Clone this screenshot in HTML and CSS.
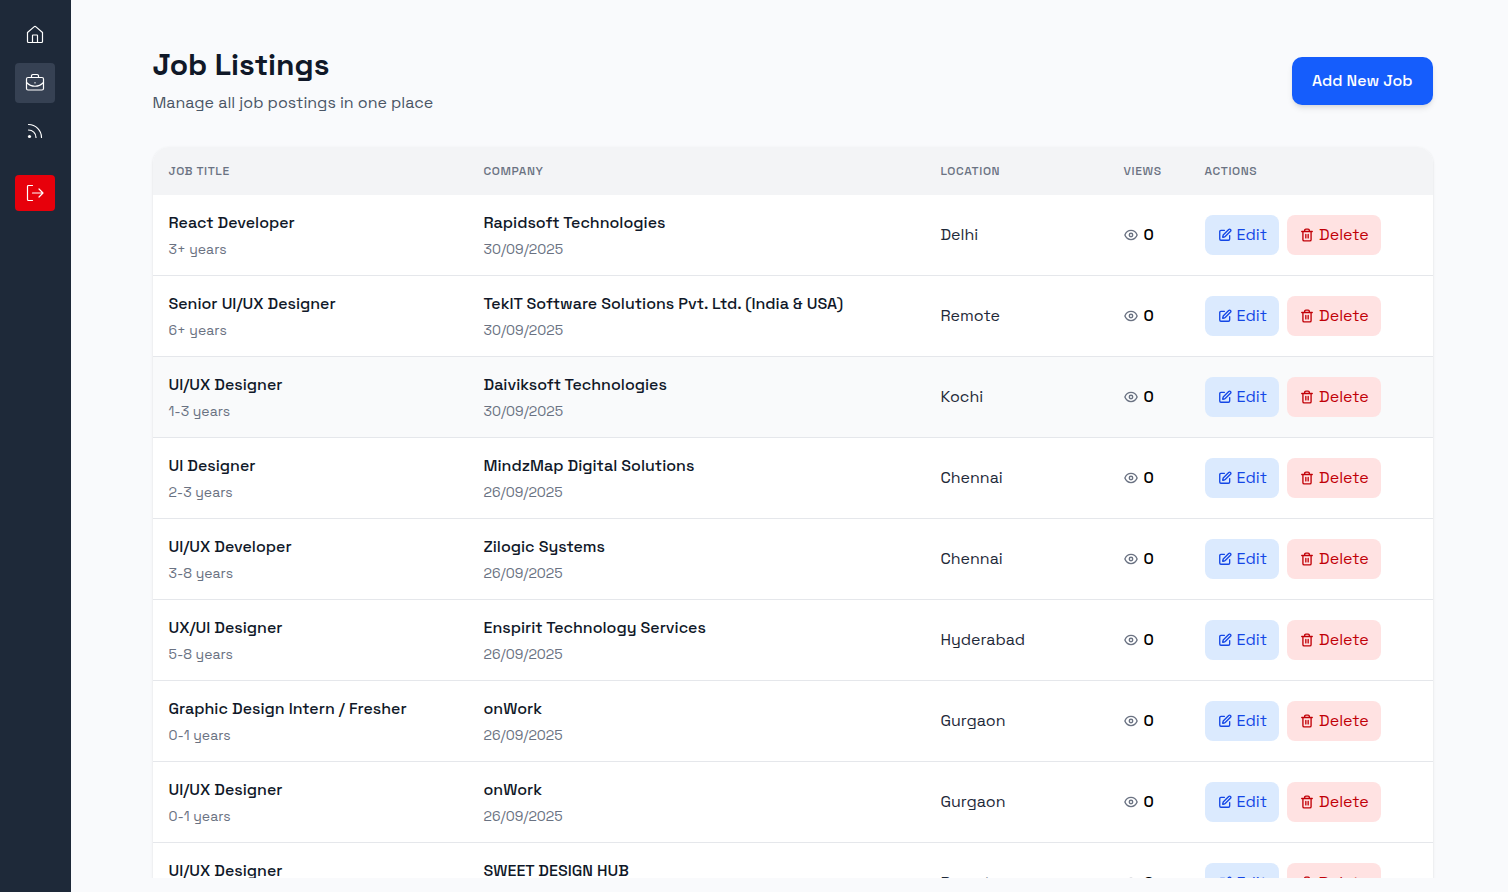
FILE: index.html
```html
<!DOCTYPE html>
<html lang="en">
<head>
    <meta charset="UTF-8">
    <meta name="viewport" content="width=device-width, initial-scale=1.0">
    <title>Job Listings</title>
    <link rel="stylesheet" href="styles.css">
</head>
<body>

    <!-- Icon set -->
    <svg class="icon-defs" aria-hidden="true">
        <symbol id="icon-edit" viewBox="0 0 24 24">
            <path d="M11 4H5a2 2 0 0 0-2 2v13a2 2 0 0 0 2 2h13a2 2 0 0 0 2-2v-6"/>
            <path d="M18.375 2.625a1 1 0 0 1 3 3l-9.013 9.014a2 2 0 0 1-.853.505l-2.873.84a.5.5 0 0 1-.62-.62l.84-2.873a2 2 0 0 1 .506-.852z"/>
        </symbol>
        <symbol id="icon-trash" viewBox="0 0 24 24">
            <path d="M3 6h18M19 6v14a2 2 0 0 1-2 2H7a2 2 0 0 1-2-2V6M8 6V4a2 2 0 0 1 2-2h4a2 2 0 0 1 2 2v2M10 11v6M14 11v6"/>
        </symbol>
        <symbol id="icon-eye" viewBox="0 0 24 24">
            <path d="M1.500 12C3.500 7 7.500 4.200 12 4.200S20.500 7 22.500 12c-2 5-6 7.800-10.500 7.800S3.500 17 1.500 12z"/>
            <circle cx="12" cy="12" r="3"/>
        </symbol>
    </svg>

    <div class="layout">
        <nav class="sidebar" aria-label="Main">
            <a href="#" class="nav-link" aria-label="Home">
                <svg class="nav-icon" viewBox="0 0 20 20"><path d="M2.500 7.500v9a1 1 0 0 0 1 1h13a1 1 0 0 0 1-1v-9L11 1.900a1.500 1.500 0 0 0-2 0zM7.500 17.500v-7a.5.5 0 0 1 .5-.5h4a.5.5 0 0 1 .5.5v7"/></svg>
            </a>
            <a href="#" class="nav-link active" aria-label="Jobs">
                <svg class="nav-icon" viewBox="0 0 20 20"><rect x="1.500" y="4.500" width="17" height="12.500" rx="1.500"/><path d="M6.500 4.500V3.500A1.500 1.500 0 0 1 8 1.500h4a1.500 1.500 0 0 1 1.500 2v1M1.500 9.500c5 5 12 5 17 0M10 9.500v.5"/></svg>
            </a>
            <a href="#" class="nav-link" aria-label="Feed">
                <svg class="nav-icon" viewBox="0 0 20 20"><path d="M3.500 3.500a13 13 0 0 1 13 13M3.500 9a7.500 7.500 0 0 1 7.500 7.500"/><circle class="dot" cx="4.500" cy="15.500" r="1.600"/></svg>
            </a>
            <button type="button" class="logout-btn" aria-label="Logout">
                <svg class="nav-icon" viewBox="0 0 20 20"><path d="M7.500 2.500h-4a1 1 0 0 0-1 1v13a1 1 0 0 0 1 1h4M7.500 10H18M14 6l4 4-4 4"/></svg>
            </button>
        </nav>

        <main class="content">
            <div class="container">
                <div class="page-header">
                    <div>
                        <h1>Job Listings</h1>
                        <p>Manage all job postings in one place</p>
                    </div>
                    <button type="button" class="add-btn">Add New Job</button>
                </div>

                <div class="table-card">
                    <table class="jobs-table">
                        <thead>
                            <tr>
                                <th class="col-title">Job Title</th>
                                <th class="col-company">Company</th>
                                <th class="col-location">Location</th>
                                <th class="col-views">Views</th>
                                <th>Actions</th>
                            </tr>
                        </thead>
                        <tbody id="jobs"></tbody>
                    </table>
                </div>
            </div>
        </main>
    </div>

    <script src="script.js"></script>
</body>
</html>
```
FILE: styles.css
```css
* {
    box-sizing: border-box;
}
body {
    margin: 0;
    font-family: "Space Grotesk", Inter, sans-serif;
    font-size: 16px;
    line-height: 24px;
    color: #000;
    background-color: #f9fafc;
}
.icon-defs {
    display: none;
}
.layout {
    display: flex;
    height: 100vh;
}

/* Sidebar */
.sidebar {
    display: flex;
    flex-direction: column;
    align-items: center;
    flex-shrink: 0;
    gap: 8px;
    width: 71px;
    padding: 15px 16px 15px 15px;
    background-color: #1e2939;
}
.nav-link {
    display: flex;
    align-items: center;
    justify-content: center;
    width: 40px;
    height: 40px;
    border-radius: 4px;
    color: #fff;
}
.nav-link.active {
    background-color: #364153;
}
.nav-icon {
    width: 20px;
    height: 20px;
    fill: none;
    stroke: currentColor;
    stroke-width: 1.2;
    stroke-linecap: round;
    stroke-linejoin: round;
}
.nav-icon .dot {
    fill: currentColor;
    stroke: none;
}
.logout-btn {
    display: flex;
    align-items: center;
    justify-content: center;
    width: 40px;
    height: 36px;
    margin-top: 16px;
    padding: 0;
    border: none;
    border-radius: 4px;
    color: #fff;
    background-color: #e7000b;
    cursor: pointer;
}

/* Page */
.content {
    flex: 1;
    min-width: 0;
    height: calc(100vh - 14px);
    padding-left: 6px;
    overflow: hidden;
}
.container {
    max-width: 1280px;
    margin: 0 auto;
    padding-top: 47px;
}
.page-header {
    display: flex;
    align-items: center;
    justify-content: space-between;
    margin-bottom: 32px;
}
.page-header h1 {
    margin: 0 0 8px;
    font-size: 30px;
    line-height: 36px;
    font-weight: 700;
    color: #101828;
}
.page-header p {
    margin: 0;
    color: #4a5565;
}
.add-btn {
    height: 48px;
    padding: 0 20px;
    border: none;
    border-radius: 10px;
    font: inherit;
    font-weight: 500;
    color: #fff;
    background-color: #155dfc;
    box-shadow: 0 4px 6px -1px rgba(0, 0, 0, .1), 0 2px 4px -2px rgba(0, 0, 0, .1);
    cursor: pointer;
}

/* Table */
.table-card {
    overflow: hidden;
    border-radius: 16px;
    background-color: #fff;
    box-shadow: 0 1px 3px rgba(0, 0, 0, .1), 0 1px 2px -1px rgba(0, 0, 0, .1);
}
.jobs-table {
    width: 100%;
    table-layout: fixed;
    border-collapse: separate;
    border-spacing: 0;
    text-align: left;
}
.jobs-table th {
    height: 48px;
    padding: 0 16px;
    font-size: 12px;
    line-height: 16px;
    font-weight: 500;
    letter-spacing: 0.6px;
    text-transform: uppercase;
    color: #6a7282;
    background-color: #f3f4f6;
}
.col-title {
    width: 315px;
}
.col-company {
    width: 457px;
}
.col-location {
    width: 183px;
}
.col-views {
    width: 81px;
}
.jobs-table td {
    height: 81px;
    padding: 0 16px;
    border-bottom: 1px solid #e5e7eb;
}
.jobs-table tr.hovered,
.jobs-table tbody tr:hover {
    background-color: #f9fafb;
}
.primary {
    font-weight: 500;
    color: #101828;
}
.secondary {
    margin-top: 4px;
    font-size: 14px;
    line-height: 20px;
    color: #6a7282;
}
.location {
    color: #1e2939;
}
.views {
    display: flex;
    align-items: center;
    gap: 6px;
    font-weight: 500;
}
.icon {
    flex-shrink: 0;
    width: 14px;
    height: 14px;
    fill: none;
    stroke: currentColor;
    stroke-width: 2.3;
    stroke-linecap: round;
    stroke-linejoin: round;
}
.views .icon {
    color: #6a7282;
}
.actions {
    display: flex;
    gap: 8px;
}
.action-btn {
    display: flex;
    align-items: center;
    gap: 5px;
    height: 40px;
    padding: 0 12px 0 13px;
    border: none;
    border-radius: 8px;
    font: inherit;
    cursor: pointer;
}
.edit {
    color: #1447e6;
    background-color: #dbeafe;
}
.delete {
    color: #c10007;
    background-color: #ffe2e2;
}
```
FILE: script.js
```js
const jobs = [
    { title: "React Developer", exp: "3+ years", company: "Rapidsoft Technologies", date: "30/09/2025", location: "Delhi" },
    { title: "Senior UI/UX Designer", exp: "6+ years", company: "TekIT Software Solutions Pvt. Ltd. (India & USA)", date: "30/09/2025", location: "Remote" },
    { title: "UI/UX Designer", exp: "1-3 years", company: "Daiviksoft Technologies", date: "30/09/2025", location: "Kochi", hovered: true },
    { title: "UI Designer", exp: "2-3 years", company: "MindzMap Digital Solutions", date: "26/09/2025", location: "Chennai" },
    { title: "UI/UX Developer", exp: "3-8 years", company: "Zilogic Systems", date: "26/09/2025", location: "Chennai" },
    { title: "UX/UI Designer", exp: "5-8 years", company: "Enspirit Technology Services", date: "26/09/2025", location: "Hyderabad" },
    { title: "Graphic Design Intern / Fresher", exp: "0-1 years", company: "onWork", date: "26/09/2025", location: "Gurgaon" },
    { title: "UI/UX Designer", exp: "0-1 years", company: "onWork", date: "26/09/2025", location: "Gurgaon" },
    { title: "UI/UX Designer", exp: "0-1 years", company: "SWEET DESIGN HUB", date: "26/09/2025", location: "Remote" },
];

const icon = (name) => `<svg class="icon" aria-hidden="true"><use href="#icon-${name}"/></svg>`;

document.getElementById("jobs").innerHTML = jobs.map((job) => `
    <tr class="${job.hovered ? "hovered" : ""}">
        <td>
            <div class="primary">${job.title}</div>
            <div class="secondary">${job.exp}</div>
        </td>
        <td>
            <div class="primary">${job.company.replace("&", "&amp;")}</div>
            <div class="secondary">${job.date}</div>
        </td>
        <td class="location">${job.location}</td>
        <td><div class="views">${icon("eye")}0</div></td>
        <td>
            <div class="actions">
                <button type="button" class="action-btn edit">${icon("edit")}Edit</button>
                <button type="button" class="action-btn delete">${icon("trash")}Delete</button>
            </div>
        </td>
    </tr>`).join("");
```
